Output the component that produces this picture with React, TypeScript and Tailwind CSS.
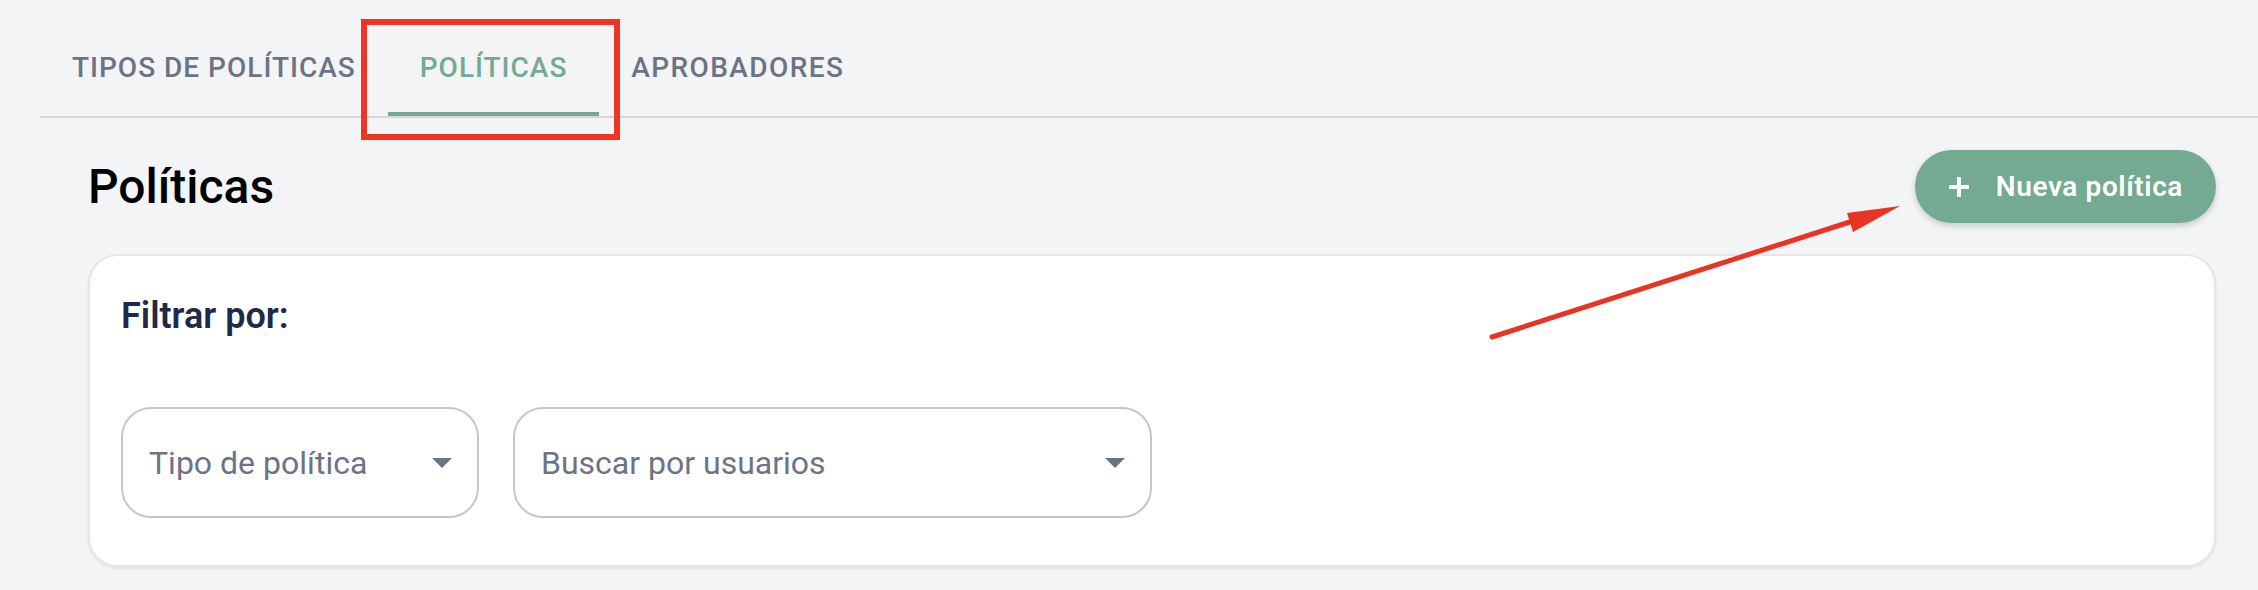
import React from "react";

const font = { fontFamily: "Roboto, 'Noto Sans', sans-serif" };

function Caret() {
  return (
    <svg width="20" height="10" viewBox="0 0 20 10" className="shrink-0">
      <polygon points="0,0 20,0 10,10" fill="#6b7385" />
    </svg>
  );
}

function SelectBox({ label, width }: { label: string; width: string }) {
  return (
    <div
      className={`${width} h-[111px] rounded-[30px] border-2 border-[#c6c6c6] bg-white flex items-center justify-between pl-[26px] pr-[25px]`}
    >
      <span className="text-[32px] leading-none text-[#6b7385]">{label}</span>
      <Caret />
    </div>
  );
}

export default function App() {
  return (
    <div className="relative min-h-[590px] w-full bg-[#f3f4f6] overflow-hidden" style={font}>
      {/* Tabs */}
      <div className="pt-[20px] pl-[40px]">
        <div className="flex h-[98px] border-b-2 border-[#d6d6da]">
          <div className="h-[96px] px-[32px] flex items-center text-[28px] font-medium uppercase tracking-[1px] text-[#6b7385]">
            Tipos de políticas
          </div>
          <div className="relative h-[96px] px-[32px] flex items-center text-[28px] font-medium uppercase tracking-[1px] text-[#73aa91]">
            Políticas
            <div className="absolute left-0 right-0 bottom-0 h-[4px] bg-[#73aa91]" />
          </div>
          <div className="h-[96px] px-[32px] flex items-center text-[28px] font-medium uppercase tracking-[1.4px] text-[#6b7385]">
            Aprobadores
          </div>
        </div>
      </div>

      {/* Content */}
      <div className="pl-[88px] pr-[42px]">
        <div className="mt-[32px] h-[73px] flex items-center justify-between">
          <h1 className="text-[48px] font-medium leading-none text-black">Políticas</h1>
          <button className="h-[73px] rounded-[37px] bg-[#73aa91] flex items-center pl-[34px] pr-[33px] shadow-[0_3px_6px_rgba(0,0,0,0.18)]">
            <svg width="20" height="20" viewBox="0 0 20 20" className="shrink-0">
              <path d="M10 1v18M1 10h18" stroke="#ffffff" strokeWidth="4" strokeLinecap="round" />
            </svg>
            <span className="ml-[27px] text-[28px] font-semibold tracking-[0.6px] text-white leading-none">
              Nueva política
            </span>
          </button>
        </div>

        <div className="mt-[31px] rounded-[30px] border-2 border-[#e6e7ea] bg-white pt-[33px] pb-[47px] px-[31px] shadow-[0_2px_3px_rgba(0,0,0,0.08)]">
          <div className="text-[36px] leading-[54px] font-semibold text-[#1f2a4b]">Filtrar por:</div>
          <div className="mt-[64px] flex gap-[34px]">
            <SelectBox label="Tipo de política" width="w-[358px]" />
            <SelectBox label="Buscar por usuarios" width="w-[639px]" />
          </div>
        </div>
      </div>

      {/* Annotations */}
      <div className="absolute left-[361px] top-[19px] w-[259px] h-[121px] border-[6px] border-[#ee3524] pointer-events-none" />
      <svg className="absolute left-0 top-0 pointer-events-none" width="2258" height="590">
        <line x1="1492" y1="337" x2="1856" y2="220" stroke="#e93323" strokeWidth="5" strokeLinecap="round" />
        <polygon points="1900,206 1847,213 1853,232" fill="#e93323" />
      </svg>
    </div>
  );
}
